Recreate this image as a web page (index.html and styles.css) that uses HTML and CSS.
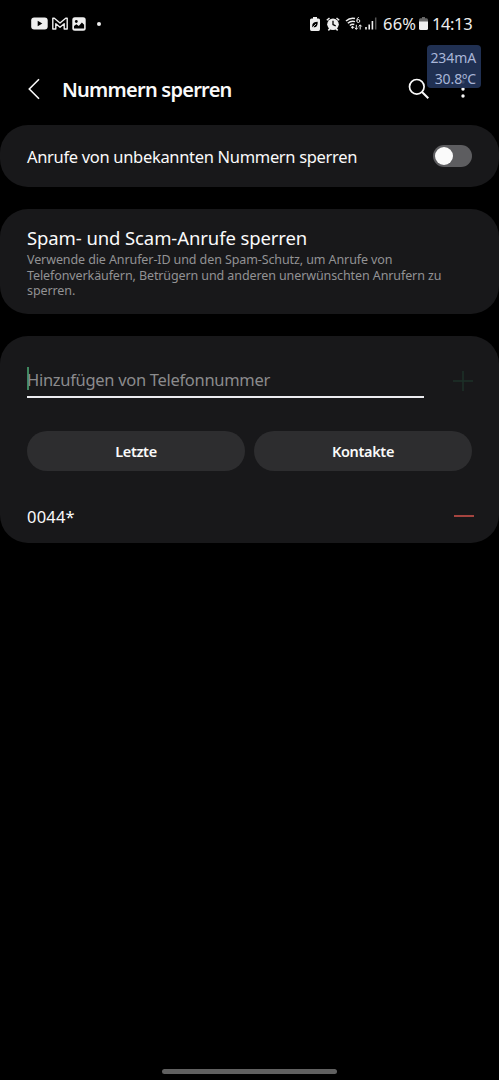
FILE: index.html
```
<!DOCTYPE html>
<html lang="de">
<head>
    <meta charset="UTF-8">
    <meta name="viewport" content="width=device-width, initial-scale=1.0">
    <title>Nummern sperren</title>
    <link rel="stylesheet" href="styles.css">
</head>
<body>
    <div class="status-bar">
        <div class="status-left">
            <svg width="17" height="13" viewBox="0 0 17 13"><rect x=".2" y=".5" width="16.5" height="12" rx="3" fill="#eee"/><path d="M6.7 3.8v5.4l4.6-2.7z" fill="#000"/></svg>
            <svg class="mail" width="16" height="13" viewBox="0 0 16 13"><path d="M.8 12V1.3h1.500L8 6l5.700-4.700h1.500V12h-3V6.800L8 10.200 3.800 6.800V12z" fill="none" stroke="#eee" stroke-width="1.4" stroke-linejoin="round"/></svg>
            <svg class="gallery" width="14" height="14" viewBox="0 0 14 14"><rect x=".3" y=".3" width="13.400" height="13.400" rx="2.5" fill="#eee"/><circle cx="4.3" cy="4.5" r="1.4" fill="#000"/><path d="M2 11.5V9l2.4-1.8 2.4 1.9 3.1-3.6 2.2 2.2v3.8z" fill="#000"/></svg>
            <span class="dot"></span>
        </div>
        <div class="status-right">
            <svg width="10" height="14" viewBox="0 0 10 14"><path d="M3 0h4v1.5h1.5Q10 1.5 10 3v9.300q0 1.700-1.500 1.700h-7Q0 14 0 12.300V3q0-1.500 1.500-1.500H3z" fill="#eee"/><path d="M2.300 10.500V7.700Q3 5 7.700 4.800q.2 5-2.800 5.400-1.200.1-1.700-.5z" fill="#000"/><path d="M2.500 10.500 6 7" stroke="#eee" stroke-width=".8"/></svg>
            <svg class="alarm" width="14" height="14" viewBox="0 0 14 14"><circle cx="7" cy="7.300" r="5.800" fill="#eee"/><path d="M.8 3.300 3.500 1M13.200 3.300 10.500 1M2.300 13.400l1.500-1.500M11.700 13.400l-1.500-1.500" stroke="#eee" stroke-width="1.500"/><path d="M7 3.800v3.700l2.700 1.300" fill="none" stroke="#000" stroke-width="1.300"/></svg>
            <svg class="wifi" width="18" height="15" viewBox="0 0 18 15"><path d="M1 5Q5 1.300 10 2.500M2.800 7.300Q6 4.500 10 5.600M4.800 9.500Q7 7.800 9.300 8.500" fill="none" stroke="#eee" stroke-width="1.500"/><path d="M5.900 11.300 7.500 9.700l1.600 1.600-1.600 1.600z" fill="#eee"/><path d="M13.800 1.300Q11.800 2 11.800 4.500" fill="none" stroke="#eee"/><circle cx="13.300" cy="5" r="1.500" fill="none" stroke="#eee"/><path d="M11.300 13.300V8.800M9.800 11.700l1.500 1.700 1.500-1.700M15.200 13.500V9M13.700 10.500l1.500-1.700 1.500 1.700" fill="none" stroke="#eee"/></svg>
            <svg class="signal" width="12" height="13" viewBox="0 0 12 13"><path d="M1 12.500V10M4.200 12.500V7.500M7.400 12.500V4" stroke="#eee" stroke-width="1.600"/><path d="M10.700 12.500V.5" stroke="#555" stroke-width="1.500"/></svg>
            <span class="percent">66%</span>
            <svg class="battery" width="9" height="13" viewBox="0 0 9 13"><path d="M3 0h3v1.300h1.500Q9 1.300 9 3v2H0V3q0-1.700 1.500-1.700H3z" fill="#666"/><path d="M0 4.500h9v7q0 1.500-1.500 1.500h-6Q0 13 0 11.500z" fill="#eee"/></svg>
            <span class="clock">14:13</span>
        </div>
    </div>

    <header class="app-bar">
        <svg class="back" width="12" height="22" viewBox="0 0 12 22"><path d="M11 1.300 1.300 11 11 20.700" fill="none" stroke="#fafafa" stroke-width="1.600"/></svg>
        <h1>Nummern sperren</h1>
        <svg class="search" width="22" height="22" viewBox="0 0 22 22"><circle cx="8.800" cy="8.800" r="7.300" fill="none" stroke="#fafafa" stroke-width="1.700"/><path d="m14 14 6.300 6.300" stroke="#fafafa" stroke-width="2"/></svg>
        <svg class="more" width="4" height="18" viewBox="0 0 4 18"><g fill="#fafafa"><circle cx="2" cy="2" r="1.700"/><circle cx="2" cy="9" r="1.700"/><circle cx="2" cy="16" r="1.700"/></g></svg>
        <div class="monitor">
            <span>234mA</span>
            <span class="temp">30.8ºC</span>
        </div>
    </header>

    <main>
        <section class="card unknown">
            <span class="label">Anrufe von unbekannten Nummern sperren</span>
            <span class="switch"></span>
        </section>

        <section class="card spam">
            <h2>Spam- und Scam-Anrufe sperren</h2>
            <p>Verwende die Anrufer-ID und den Spam-Schutz, um Anrufe von<br>Telefonverkäufern, Betrügern und anderen unerwünschten Anrufern zu<br>sperren.</p>
        </section>

        <section class="card numbers">
            <div class="add-row">
                <div class="field"><span>Hinzufügen von Telefonnummer</span></div>
                <svg width="22" height="22" viewBox="0 0 22 22"><path d="M11 1v20M1 11h20" stroke="#1c3029" stroke-width="1.500"/></svg>
            </div>
            <div class="buttons">
                <button>Letzte</button>
                <button>Kontakte</button>
            </div>
            <div class="number-row">
                <span>0044*</span>
                <i class="remove"></i>
            </div>
        </section>
    </main>

    <div class="nav-handle"></div>
</body>
</html>
```
FILE: styles.css
```
* {
    box-sizing: border-box;
}
body {
    margin: 0;
    height: 1080px;
    background: #000;
    color: #fafafa;
    font-family: "Noto Sans", sans-serif;
    display: flex;
    flex-direction: column;
    overflow: hidden;
}
svg {
    display: block;
    flex: none;
}
.status-bar {
    height: 47px;
    padding: 0 27px 0 31px;
    display: flex;
    align-items: center;
    justify-content: space-between;
    color: #eee;
    font-size: 16.5px;
    white-space: nowrap;
}
.status-left, .status-right {
    display: flex;
    align-items: center;
}
.mail {
    margin-left: 4px;
}
.gallery {
    margin-left: 4px;
}
.dot {
    width: 4px;
    height: 4px;
    margin-left: 11px;
    border-radius: 50%;
    background: #eee;
}
.alarm {
    margin-left: 6px;
}
.wifi {
    margin-left: 5px;
}
.signal {
    margin-left: 2px;
}
.percent {
    width: 34px;
    margin-left: 6px;
    letter-spacing: .2px;
}
.battery {
    margin: 0 4px 0 2px;
}
.clock {
    width: 40px;
    letter-spacing: -.4px;
}
.app-bar {
    position: relative;
    height: 78px;
    padding: 6px 34px 0 28px;
    display: flex;
    align-items: center;
}
h1 {
    flex: 1;
    margin: 2px 0 0 22px;
    font-size: 20px;
    line-height: 28px;
    font-weight: 600;
    letter-spacing: -.75px;
}
.more {
    margin: 0 0 0 31px;
}
.monitor {
    position: absolute;
    top: -2px;
    left: 427px;
    width: 54px;
    height: 43px;
    padding: 2px 5px 0 0;
    border-radius: 4px;
    background: rgba(36, 53, 91, .9);
    color: #a9b6d8;
    font-size: 14px;
    line-height: 21px;
    text-align: right;
    letter-spacing: -.1px;
}
.monitor span {
    display: block;
}
main {
    display: flex;
    flex-direction: column;
    gap: 22px;
}
.card {
    border-radius: 28px;
    background: #18181a;
    padding: 0 27px;
}
.unknown {
    height: 62px;
    display: flex;
    align-items: center;
    justify-content: space-between;
}
.label {
    font-size: 16.5px;
    letter-spacing: -.32px;
}
.switch {
    width: 39px;
    height: 22px;
    padding: 2px;
    border-radius: 11px;
    background: #5d5d60;
}
.switch::before {
    content: "";
    display: block;
    width: 18px;
    height: 18px;
    border-radius: 50%;
    background: #fafafa;
}
.spam {
    height: 105px;
    padding-top: 16px;
}
h2 {
    margin: 0 0 1px;
    font-size: 18.5px;
    line-height: 26px;
    font-weight: 400;
    letter-spacing: -.1px;
}
p {
    margin: 0;
    color: #929294;
    font-size: 12.5px;
    line-height: 15.5px;
    letter-spacing: -.1px;
    white-space: nowrap;
}
.numbers {
    height: 207px;
}
.add-row {
    height: 95px;
    display: flex;
    justify-content: space-between;
}
.add-row svg {
    margin: 34px -2px 0 0;
}
.field {
    width: 397px;
    height: 32px;
    margin-top: 30px;
    border-bottom: 2px solid #ececf0;
    color: #8b8b8d;
    font-size: 16.5px;
    line-height: 27px;
    letter-spacing: -.3px;
}
.field::before {
    content: "";
    float: left;
    width: 2px;
    height: 23px;
    margin: 1px -2px 0 0;
    background: #3f875f;
}
.buttons {
    display: flex;
    gap: 9px;
}
.buttons button {
    flex: 1;
    height: 40px;
    padding: 0;
    border: 0;
    border-radius: 20px;
    background: #2d2d2f;
    color: #fafafa;
    font: 600 14.5px/40px "Noto Sans", sans-serif;
    letter-spacing: -.35px;
}
.number-row {
    height: 72px;
    padding-top: 18px;
    display: flex;
    align-items: center;
    justify-content: space-between;
    font-size: 16.5px;
    letter-spacing: .2px;
}
.remove {
    width: 20px;
    height: 2px;
    margin-right: -2px;
    background: #a5443f;
}
.nav-handle {
    width: 175px;
    height: 5px;
    margin: auto auto 6px 162px;
    border-radius: 3px;
    background: #606060;
}
```
